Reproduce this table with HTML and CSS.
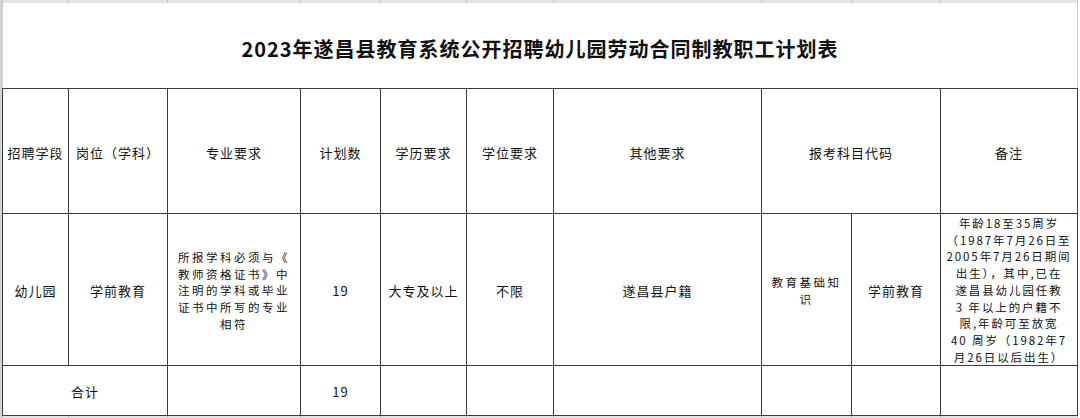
FILE: index.html
```html
<!DOCTYPE html>
<html lang="zh-CN">
<head>
<meta charset="utf-8">
<title>2023年遂昌县教育系统公开招聘幼儿园劳动合同制教职工计划表</title>
<link rel="stylesheet" href="styles.css">
</head>
<body>
<div class="sheet">
  <div class="strip">
    <span></span><span></span><span></span><span></span><span></span>
    <span></span><span></span><span></span><span></span><span></span>
  </div>
  <div class="title">2023年遂昌县教育系统公开招聘幼儿园劳动合同制教职工计划表</div>
  <table class="plan">
    <colgroup>
      <col class="c66"><col class="c99"><col class="c133"><col class="c80"><col class="c86">
      <col class="c87"><col class="c208"><col class="c90"><col class="c89"><col class="c137">
    </colgroup>
    <tr class="head">
      <td>招聘学段</td>
      <td>岗位（学科）</td>
      <td>专业要求</td>
      <td>计划数</td>
      <td>学历要求</td>
      <td>学位要求</td>
      <td>其他要求</td>
      <td colspan="2">报考科目代码</td>
      <td>备注</td>
    </tr>
    <tr class="row">
      <td>幼儿园</td>
      <td>学前教育</td>
      <td class="multi">所报学科必须与《<br>教师资格证书》中<br>注明的学科或毕业<br>证书中所写的专业<br>相符</td>
      <td>19</td>
      <td>大专及以上</td>
      <td>不限</td>
      <td>遂昌县户籍</td>
      <td class="multi">教育基础知<br>识</td>
      <td>学前教育</td>
      <td class="multi note">年龄18至35周岁<br>（1987年7月26日至<br>2005年7月26日期间<br>出生），其中,已在<br>遂昌县幼儿园任教<br>3 年以上的户籍不<br>限,年龄可至放宽<br>40 周岁（1982年7<br>月26日以后出生）</td>
    </tr>
    <tr class="total">
      <td colspan="2">合计</td>
      <td></td>
      <td>19</td>
      <td></td>
      <td></td>
      <td></td>
      <td></td>
      <td></td>
      <td></td>
    </tr>
  </table>
  <div class="strip">
    <span></span><span></span><span></span><span></span><span></span>
    <span></span><span></span><span></span><span></span><span></span>
  </div>
</div>
</body>
</html>
```
FILE: styles.css
```css
html, body {
  margin: 0;
  padding: 0;
  background: #ffffff;
}

body {
  font-family: "Noto Sans CJK SC", "Noto Sans", sans-serif;
  color: #111111;
}

.sheet {
  width: 1080px;
  height: 418px;
  overflow: hidden;
  border-left: 2px solid #d4d4d4;
  box-sizing: border-box;
}

.strip {
  display: grid;
  grid-template-columns: 66px 99px 133px 80px 86px 87px 208px 90px 89px 137px;
  height: 3px;
  width: 1076px;
  box-sizing: border-box;
  border-left: 1px solid #c4c4c4;
  background: #e4e4e4;
}

.strip span {
  border-right: 1px solid #c4c4c4;
}

.title {
  width: 1076px;
  height: 85px;
  box-sizing: border-box;
  border-left: 1px solid #cfcfcf;
  border-right: 1px solid #cfcfcf;
  display: flex;
  align-items: center;
  justify-content: center;
  padding-top: 6px;
  font-size: 20px;
  font-weight: 700;
  letter-spacing: 1px;
  color: #111111;
}

.plan {
  width: 1076px;
  border-collapse: collapse;
  table-layout: fixed;
  font-size: 13px;
  letter-spacing: 1px;
}

.c66 { width: 66px; }
.c99 { width: 99px; }
.c133 { width: 133px; }
.c80 { width: 80px; }
.c86 { width: 86px; }
.c87 { width: 87px; }
.c208 { width: 208px; }
.c90 { width: 90px; }
.c89 { width: 89px; }
.c137 { width: 137px; }

.plan td {
  border: 1px solid #3c3c3c;
  padding: 2px 2px 0;
  text-align: center;
  vertical-align: middle;
  white-space: nowrap;
}

.plan .multi {
  font-size: 11.5px;
  letter-spacing: 2.5px;
  line-height: 16.7px;
}

.plan .note {
  padding: 1px 0 0;
  letter-spacing: 1.9px;
}

.head { height: 125px; }
.row { height: 152px; }
.total { height: 50px; }
```
